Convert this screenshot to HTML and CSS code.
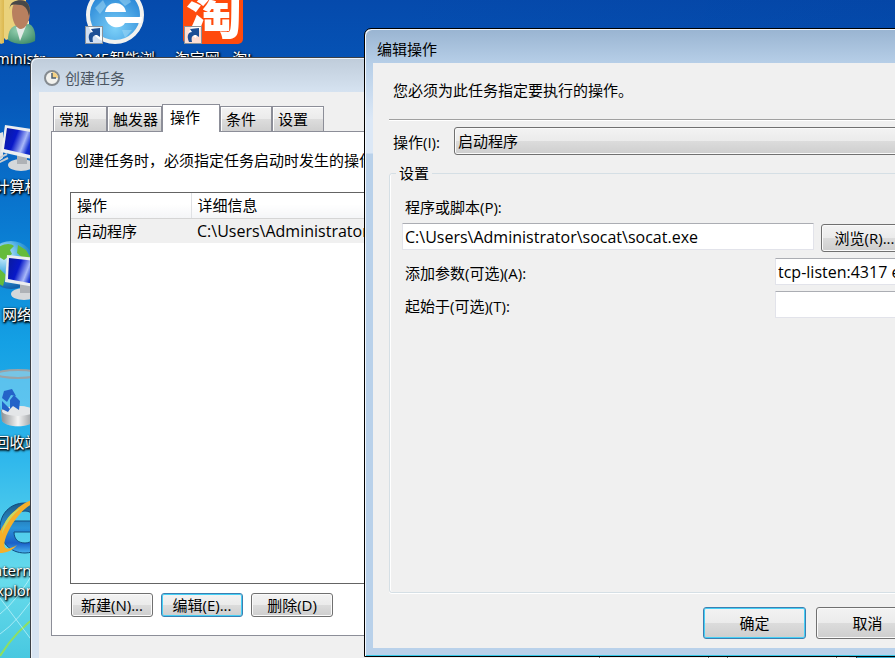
FILE: index.html
```html
<!DOCTYPE html>
<html lang="zh-CN">
<head>
  <meta charset="UTF-8" />
  <meta name="viewport" content="width=device-width, initial-scale=1" />
  <title>创建任务</title>
  <link rel="stylesheet" href="styles.css">
</head>
<body>
  <!-- shared gradients and shapes -->
  <svg class="defs" aria-hidden="true">
    <defs>
      <linearGradient id="screen" x1="0" y1="0" x2="1" y2="0.3">
        <stop offset="0" stop-color="#0a1a9c" />
        <stop offset="0.35" stop-color="#0818c8" />
        <stop offset="0.6" stop-color="#a8b8f8" />
        <stop offset="0.75" stop-color="#1430d0" />
        <stop offset="1" stop-color="#0a1a9c" />
      </linearGradient>
      <linearGradient id="metal" x1="0" y1="0" x2="1" y2="0">
        <stop offset="0" stop-color="#8a8e92" />
        <stop offset="0.5" stop-color="#f4f4f4" />
        <stop offset="1" stop-color="#8a8e92" />
      </linearGradient>
      <linearGradient id="folder" x1="0" y1="0" x2="1" y2="0">
        <stop offset="0" stop-color="#f8e9a0" />
        <stop offset="1" stop-color="#dcb850" />
      </linearGradient>
      <radialGradient id="shirt" cx="0.4" cy="0.3" r="0.8">
        <stop offset="0" stop-color="#9ad4b4" />
        <stop offset="1" stop-color="#3c8a68" />
      </radialGradient>
      <radialGradient id="globe" cx="0.35" cy="0.3" r="0.8">
        <stop offset="0" stop-color="#d8f4ff" />
        <stop offset="0.5" stop-color="#3aa4e0" />
        <stop offset="1" stop-color="#0a4c98" />
      </radialGradient>
      <radialGradient id="ball" cx="0.5" cy="0.75" r="0.8">
        <stop offset="0" stop-color="#7cd0f8" />
        <stop offset="1" stop-color="#1878d0" />
      </radialGradient>
      <linearGradient id="ie" x1="0" y1="0" x2="0" y2="1">
        <stop offset="0" stop-color="#1c5c88" />
        <stop offset="0.5" stop-color="#2a94d8" />
        <stop offset="0.8" stop-color="#1a60c8" />
        <stop offset="1" stop-color="#48b4f0" />
      </linearGradient>
      <g id="shortcut">
        <rect x="0.5" y="0.5" width="17" height="17" fill="#fff" fill-opacity="0.82" stroke="#8a929a" />
        <path d="M5 16C2 9 5 6 8 6L6 3l9-1 0 9-3-2C8 9 7 11 8 16z" fill="#1d4f95" />
      </g>
    </defs>
  </svg>

  <div class="desktop">
    <!-- light streaks of the wallpaper -->
    <svg class="streaks" width="60" height="120" viewBox="0 0 60 120" aria-hidden="true">
      <path d="M0 118Q16 92 40 76" fill="none" stroke="#8fe060" stroke-width="2" />
      <path d="M0 96Q18 84 40 50M0 76Q18 62 36 30M0 60l36 48" fill="none" stroke="#d8faff" stroke-opacity="0.6" />
    </svg>

    <div class="icons">
      <div class="icon">
        <svg width="60" height="60" viewBox="0 0 60 60">
          <path d="M4 0h13v59l-3 1L4 52z" fill="url(#folder)" />
          <path d="M17 0h22v48l-20 8-2-2z" fill="#ead27c" />
          <path d="M39 36l3 1v14l-3 2z" fill="#f8f0c0" />
          <path d="M21 56c0-9 3-14 10-15l11-1c5 2 7 9 6 17-7 4-20 4-27-1z" fill="url(#shirt)" />
          <path d="M29 43l4 14 6-15z" fill="#e4ebe8" />
          <path d="M25 28c0-8 4-12 9-12 6 0 9 5 9 12 0 8-4 17-9 17s-9-8-9-17z" fill="#b8805f" />
          <path d="M23 26c-1-6 3-6 11-5 5 1 7 6 8 11 2-5 1-12-4-15-6-2-17 0-15 9z" fill="#484848" />
        </svg>
        <span>Administr...</span>
      </div>
      <div class="icon">
        <svg width="60" height="60" viewBox="0 0 60 60">
          <circle cx="30" cy="31" r="27" fill="url(#ball)" stroke="#f2f2ef" stroke-width="4" />
          <path d="M30 12q10-6 16 6l-6 4zM10 24l8-8 3 6-6 8zM37 46l10 0-7 8z" fill="#a5dcf5" opacity="0.5" />
          <path d="M20 28C22 16 39 16 41 28z" fill="#fff" />
          <path d="M20 33h37l-1 6H40C36 46 23 45 20 33z" fill="#fff" />
          <use href="#shortcut" x="0" y="42" />
        </svg>
        <span>2345智能浏</span>
      </div>
      <div class="icon">
        <svg width="60" height="60" viewBox="0 0 60 60">
          <rect width="60" height="60" rx="5" fill="#ff4a0c" />
          <text x="31" y="49" class="tao">淘</text>
          <use href="#shortcut" x="1" y="42" />
        </svg>
        <span>淘宝网 - 淘!</span>
      </div>
      <div class="icon row2">
        <svg width="60" height="60" viewBox="0 0 60 60">
          <path d="M4 24l12-4v26L8 52H2z" fill="#e0e2e4" />
          <path d="M6 49l14-7M7 53l14-7" stroke="#c8ccd0" stroke-width="2" />
          <ellipse cx="34" cy="53" rx="13" ry="6" fill="#d5d8da" />
          <path d="M30 43h10v9H30z" fill="#aeb2b6" />
          <path d="M18 13l40 6v31l-44-10z" fill="#eceeef" />
          <path d="M20 16l36 6v24l-39-9z" fill="url(#screen)" />
        </svg>
        <span>计算机</span>
      </div>
      <div class="icon row3">
        <svg width="60" height="60" viewBox="0 0 60 60">
          <circle cx="24" cy="25" r="24" fill="url(#globe)" />
          <path d="M10 8c7-5 14-5 17-2l-4 4 2 4-8 6-5-3-5 4c-2-4 0-10 3-13zM31 5l8 5 6 10-9-2-6-5zM4 26c6-1 11 5 15 9l-3 11C7 42 2 34 4 26z" fill="#65bb3b" />
          <ellipse cx="37" cy="54" rx="13" ry="6" fill="#d5d8da" />
          <path d="M33 43h10v10H33z" fill="#aeb2b6" />
          <path d="M20 15l40 4v30l-42-7z" fill="#eceeef" />
          <path d="M22 18l36 4v24l-37-7z" fill="url(#screen)" />
        </svg>
        <span>网络</span>
      </div>
      <div class="icon row4">
        <svg width="60" height="60" viewBox="0 0 60 60">
          <path d="M9 5h44l-6 48c-5 7-27 7-32 0z" fill="#b6e8fa" fill-opacity="0.4" />
          <path d="M14 42q17-8 34 0l-1 11c-5 7-27 7-32 0z" fill="url(#metal)" />
          <ellipse cx="31" cy="43" rx="16" ry="5" fill="#e4e6e8" />
          <ellipse cx="31" cy="6" rx="22" ry="4" fill="#77c5e5" stroke="#9ca2a6" stroke-width="2" />
          <path d="M17 23l8-2 4 7-5-1-4 7-5-4zM27 27l6 6-1 9-6-4-3 3 0-9zM15 33l8 8-2 3-6-3z" fill="#2462c8" />
        </svg>
        <span>回收站</span>
      </div>
      <div class="icon row5">
        <svg width="60" height="60" viewBox="0 0 60 60">
          <path d="M38 7C23 7 13 18 13 32s10 25 25 25c10 0 17-6 20-14H46c-2 3-5 4-8 4-6 0-11-3-11-11h32C60 18 52 7 38 7zM26 25c2-6 6-10 12-10s9 4 10 10z" fill="url(#ie)" stroke="#104c80" />
          <path d="M52 3C36 3 20 20 11 39c-5 12-4 17 2 18 6 0 12-2 17-8-8 5-15 6-12-5C22 30 36 9 52 5z" fill="#f4b02a" />
          <path d="M34 12C26 18 19 28 15 38c1-12 8-22 19-26z" fill="#c8d860" />
        </svg>
        <span>Internet Explorer</span>
      </div>
    </div>

    <section class="window task" aria-label="创建任务">
      <header class="title">
        <svg width="18" height="18" viewBox="0 0 18 18">
          <circle cx="9" cy="9" r="7" fill="#f2f2ee" stroke="#858b90" stroke-width="2" />
          <path d="M9 9V3a6 6 0 0 1 6 6z" fill="#f5d183" />
          <path d="M9 4v5h4" fill="none" stroke="#4c5f72" stroke-width="1.5" />
        </svg>
        <span>创建任务</span>
      </header>
      <div class="client">
        <div class="tabs" role="tablist">
          <button role="tab">常规</button>
          <button role="tab">触发器</button>
          <button role="tab" class="active" aria-selected="true">操作</button>
          <button role="tab">条件</button>
          <button role="tab">设置</button>
        </div>
        <div class="panel" role="tabpanel">
          <p>创建任务时，必须指定任务启动时发生的操作。</p>
          <div class="list">
            <table>
              <thead>
                <tr><th>操作</th><th>详细信息</th></tr>
              </thead>
              <tbody>
                <tr><td>启动程序</td><td class="path">C:\Users\Administrator\socat\socat.exe</td></tr>
              </tbody>
            </table>
          </div>
          <div class="actions">
            <button class="btn">新建(N)...</button>
            <button class="btn focus">编辑(E)...</button>
            <button class="btn">删除(D)</button>
          </div>
        </div>
        <footer>
          <button class="btn">确定</button>
          <button class="btn">取消</button>
        </footer>
      </div>
    </section>

    <section class="window edit" role="dialog" aria-label="编辑操作">
      <header class="title"><span>编辑操作</span></header>
      <form class="client">
        <p>您必须为此任务指定要执行的操作。</p>
        <div class="action-row">
          <label for="action">操作(I):</label>
          <select id="action"><option>启动程序</option></select>
        </div>
        <fieldset>
          <legend>设置</legend>
          <label for="program">程序或脚本(P):</label>
          <div class="program-row">
            <input type="text" id="program" value="C:\Users\Administrator\socat\socat.exe" />
            <button type="button" class="btn">浏览(R)...</button>
          </div>
          <div class="field-row">
            <label for="args">添加参数(可选)(A):</label>
            <input type="text" id="args" value="tcp-listen:4317 exec" />
          </div>
          <div class="field-row">
            <label for="start">起始于(可选)(T):</label>
            <input type="text" id="start" />
          </div>
        </fieldset>
        <footer>
          <button type="button" class="btn focus">确定</button>
          <button type="button" class="btn">取消</button>
        </footer>
      </form>
    </section>
  </div>
</body>
</html>
```
FILE: styles.css
```css
* {
  box-sizing: border-box;
}
body {
  margin: 0;
  font-family: "Open Sans", "Noto Sans CJK SC", sans-serif;
  font-size: 15px;
  line-height: 20px;
  color: #000;
}
button, input, select {
  font: inherit;
  color: inherit;
}
p {
  margin: 0;
}
.defs {
  position: absolute;
  width: 0;
  height: 0;
}
.desktop {
  position: relative;
  height: 100vh;
  overflow: hidden;
  background: linear-gradient(100deg, transparent 40%, rgba(0, 50, 140, 0.2)),
    linear-gradient(#054aac, #0658ba 15%, #0a7cd2 35%, #14a0e4 52%, #30b8ec 70%, #68dcec 88%, #48c8e0);
}
.streaks {
  position: absolute;
  left: 0;
  bottom: 0;
}

/* desktop icons */
.icons {
  display: grid;
  grid-template-columns: repeat(3, 98px);
  grid-auto-rows: 128px;
  margin: -16px 0 0 -32px;
}
.icon {
  display: flex;
  flex-direction: column;
  align-items: center;
  gap: 4px;
  color: #fff;
  text-align: center;
  text-shadow: 1px 1px 2px #000, 1px 1px 2px #000, 0 1px 3px #000;
}
.icon svg {
  position: relative;
  flex: none;
}
.icon span {
  width: 98px;
}
.row2, .row3, .row4, .row5 {
  grid-column: 1;
}
.tao {
  font-family: "Noto Sans CJK SC", sans-serif;
  font-size: 56px;
  font-weight: 900;
  fill: #fff;
  text-anchor: middle;
  text-shadow: none;
}

/* windows */
.window {
  position: absolute;
  display: flex;
  flex-direction: column;
  padding: 0 7px 7px;
  border: 1px solid #3c4046;
  border-radius: 7px 7px 0 0;
}
.title {
  display: flex;
  align-items: center;
  gap: 4px;
  height: 34px;
  padding: 6px 4px 0;
}
.client {
  flex: 1;
  display: flex;
  flex-direction: column;
  background: #f0f0f0;
}
.task {
  top: 57px;
  left: 30px;
  right: 38px;
  bottom: -42px;
  padding-left: 8px;
  background: linear-gradient(#bfccda, #d7e4f2 36px);
  box-shadow: inset 1px 1px #eef4fa;
}
.task .title {
  color: #4c5763;
}
.edit {
  top: 28px;
  left: 364px;
  right: -43px;
  bottom: 1px;
  padding: 0 7px 8px 8px;
  border-color: #000;
  background: linear-gradient(#99b4d1, #b7cfe8 35px, #dce8f6 90px, #dce8f6 124px, #b9d1ea 125px);
  box-shadow: inset 1px 1px #f4f9ff, inset 0 -1px #35c8e8;
}

/* buttons */
.btn {
  height: 24px;
  padding: 0 5px;
  border: 1px solid #707070;
  border-radius: 3px;
  background: linear-gradient(#f3f3f3, #ebebeb 49%, #dcdcdc 50%, #cecece);
  box-shadow: inset 0 0 0 1px #fafafa;
  white-space: nowrap;
}
.btn.focus {
  border-color: #3c7fb1;
  box-shadow: inset 0 0 0 1px #46d0f6;
}

/* create task */
.task .client {
  padding: 12px 12px 0;
}
.tabs {
  display: flex;
  align-items: flex-end;
  height: 28px;
  padding-left: 2px;
}
.tabs button {
  height: 26px;
  padding: 0 15px 0 5px;
  border: 1px solid #8c8e98;
  background: linear-gradient(#f3f3f3, #ebebeb 49%, #dddddd 50%, #cfcfcf);
  box-shadow: inset 1px 1px #fff;
}
.tabs button:first-child {
  padding-right: 17px;
}
.tabs button:nth-child(2) {
  padding-right: 3px;
}
.tabs .active {
  z-index: 1;
  height: 28px;
  padding: 0 19px 4px 7px;
  border-bottom: 0;
  background: #fff;
}
.panel {
  flex: 1;
  display: flex;
  flex-direction: column;
  margin-top: -1px;
  padding: 18px;
  border: 1px solid #8c8e98;
  background: #fff;
}
.panel p {
  padding-left: 4px;
}
.list {
  flex: 1;
  margin-top: 22px;
  border: 1px solid #646464;
}
.list table {
  width: 100%;
  table-layout: fixed;
  border-collapse: collapse;
}
.list th, .list td {
  padding: 2px 6px;
  text-align: left;
  font-weight: normal;
  height: 25px;
}
.list th:first-child {
  width: 120px;
}
.list th {
  border-right: 1px solid #dfe1e4;
  border-bottom: 1px solid #d5d5d5;
  background: linear-gradient(#fff 45%, #f4f5f7);
}
.list tbody tr {
  background: #f0f0f0;
}
.list .path {
  font-size: 16px;
}
.actions {
  display: flex;
  gap: 8px;
  padding: 9px 0 0 1px;
}
.actions .btn {
  width: 82px;
}
.task footer {
  display: flex;
  justify-content: flex-end;
  gap: 18px;
  padding: 14px 0 12px;
}
.task footer .btn {
  width: 110px;
  height: 30px;
}

/* edit action */
.edit .client {
  padding: 17px 11px 9px 16px;
}
.edit p {
  padding: 0 4px 19px;
  border-bottom: 1px solid #a0a0a0;
  box-shadow: 0 1px #fff;
}
.action-row {
  display: flex;
  align-items: center;
  margin-top: 7px;
  padding-left: 4px;
}
.action-row label {
  width: 61px;
  padding-top: 1px;
}
select {
  flex: 1;
  height: 28px;
  padding: 0 3px;
  appearance: none;
  border: 1px solid #707070;
  border-radius: 3px;
  background: linear-gradient(#f3f3f3, #ebebeb 49%, #dcdcdc 50%, #cecece);
  box-shadow: inset 0 0 0 1px #fafafa;
}
fieldset {
  flex: 1;
  min-width: 0;
  margin: 8px 0 0;
  padding: 14px 10px 0 12px;
  border: 1px solid #d5dfe5;
  border-radius: 3px;
  box-shadow: 0 1px #fff, inset 1px 0 #fff;
}
legend {
  margin-left: -6px;
  padding: 0 3px;
}
fieldset label {
  padding-left: 3px;
}
input {
  height: 27px;
  padding: 0 2px;
  border: 1px solid #e2e3ea;
  border-top-color: #abadb3;
  border-radius: 1px;
  background: #fff;
  font-size: 16px;
}
.program-row {
  display: flex;
  gap: 7px;
  margin-top: 6px;
}
.program-row input {
  flex: 1;
  min-width: 0;
}
.program-row .btn {
  width: 87px;
  height: 28px;
  margin-top: 1px;
}
.field-row {
  display: flex;
  justify-content: space-between;
  align-items: center;
  margin-top: 6px;
}
.field-row label {
  padding-top: 3px;
}
.field-row input {
  width: 133px;
}
.edit footer {
  display: flex;
  justify-content: flex-end;
  gap: 10px;
  padding-top: 14px;
}
.edit footer .btn {
  width: 103px;
  height: 32px;
}
```
